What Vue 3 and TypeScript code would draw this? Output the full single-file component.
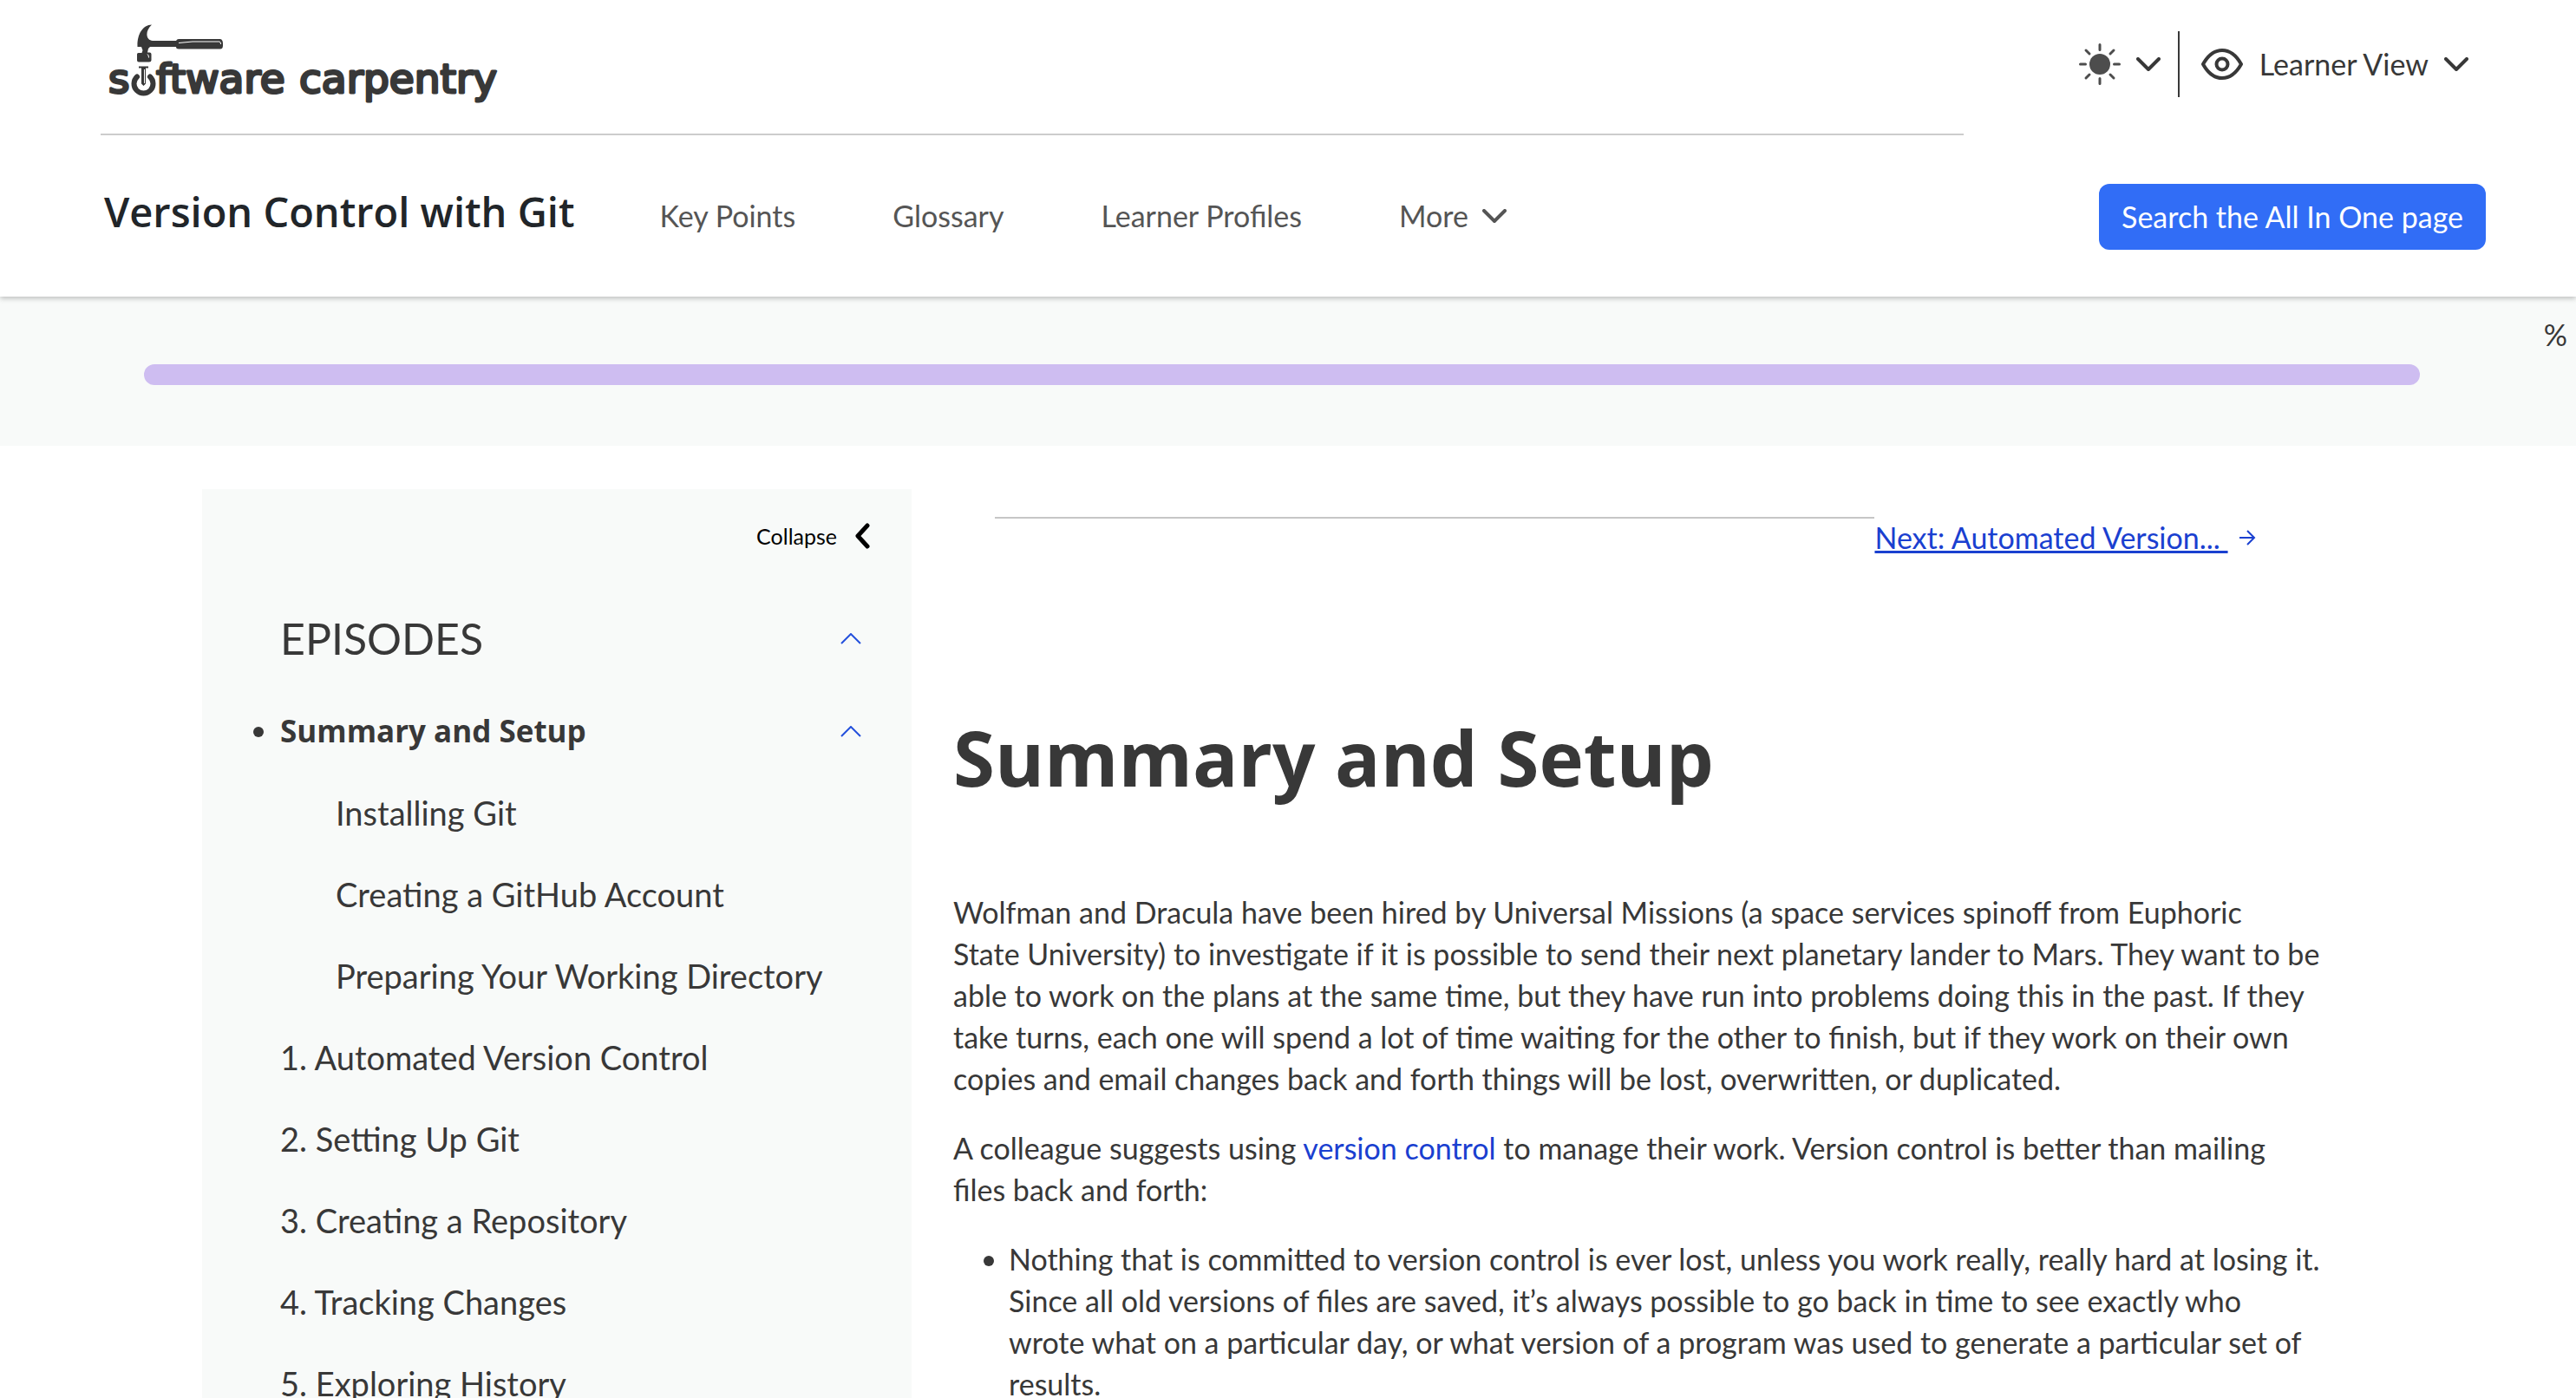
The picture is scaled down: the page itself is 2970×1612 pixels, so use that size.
<script setup lang="ts">
import { ref } from 'vue'

interface Episode {
  label: string
}

const navLinks: string[] = ['Key Points', 'Glossary', 'Learner Profiles']
const sections: string[] = ['Installing Git', 'Creating a GitHub Account', 'Preparing Your Working Directory']
const episodes: Episode[] = [
  { label: '1. Automated Version Control' },
  { label: '2. Setting Up Git' },
  { label: '3. Creating a Repository' },
  { label: '4. Tracking Changes' },
  { label: '5. Exploring History' },
]
const episodesOpen = ref(true)
const sectionsOpen = ref(true)
</script>

<template>
  <div class="page">
    <header class="header">
      <div class="top">
        <a class="brand" href="#" aria-label="software carpentry">
          <svg width="464" height="100" viewBox="0 0 464 100">
            <text class="wordmark" x="9" y="79">s<tspan class="ghost">o</tspan><tspan x="64">ftware</tspan> <tspan x="229">carpentry</tspan></text>
            <path class="ring" d="M42 60.500A11 11 0 1 0 57 60.500" />
            <path class="ink" d="M44 48.500h11v2h-3v18l-2.500 2.500l-2.500-2.500v-18h-3z" />
            <path class="shine" d="M50.500 52v16" />
            <path
              class="ink"
              d="M59 0.500C48 1 42 12 42.500 26h4.500l1.500 4l-1 3h-4q-1.500 0-1.500 1.500v7q0 2 2 2h12q2.500 0 2.500-2v-7q0-2-2-2h-2.500l1-4.500l2-2H87q0 2.500 3 2.500h48q3 0 3-4v-2q0-5-3-5.500H90q-2 0-3 2H60C53 18.500 50 9 59 0.500z"
            />
            <path class="shine" d="M90 21.500l16-1.500h31q1.500 0 1.500 3M54 34.500q1.500 1 1.500 4" />
          </svg>
        </a>
        <div class="tools">
          <button class="tool" type="button" aria-label="Colour theme">
            <svg width="48" height="48" viewBox="0 0 48 48">
              <circle cx="24" cy="24" r="12" fill="#4d4d4d" />
              <path
                d="M24 1.500v6M24 40.500v6M1.500 24h6M40.500 24h6M8 8l4 4M36 36l4 4M8 40l4-4M36 12l4-4"
                stroke="#4d4d4d" stroke-width="3" stroke-linecap="round"
              />
            </svg>
            <svg class="chevron" width="28" height="16" viewBox="0 0 28 16">
              <path d="M2 2l12 12L26 2" />
            </svg>
          </button>
          <span class="divider"></span>
          <button class="tool view" type="button">
            <svg width="50" height="38" viewBox="0 0 50 38">
              <path d="M3 19Q12 3 25 3T47 19Q38 35 25 35T3 19z" fill="none" stroke="#383838" stroke-width="4" stroke-linejoin="round" />
              <circle cx="25" cy="19" r="6.500" fill="none" stroke="#383838" stroke-width="4" />
            </svg>
            <span>Learner View</span>
            <svg class="chevron" width="28" height="16" viewBox="0 0 28 16">
              <path d="M2 2l12 12L26 2" />
            </svg>
          </button>
        </div>
      </div>
      <div class="bar">
        <a class="title" href="#">Version Control with Git</a>
        <nav class="nav">
          <a v-for="link in navLinks" :key="link" href="#">{{ link }}</a>
          <button class="more" type="button">
            More
            <svg class="chevron" width="28" height="16" viewBox="0 0 28 16">
              <path d="M2 2l12 12L26 2" />
            </svg>
          </button>
        </nav>
        <button class="search" type="button">Search the All In One page</button>
      </div>
    </header>

    <section class="progress">
      <span class="percent">%</span>
      <div class="track"></div>
    </section>

    <div class="main">
      <aside class="sidebar">
        <button class="collapse" type="button">
          Collapse
          <svg width="18" height="30" viewBox="0 0 18 30">
            <path d="M15 3L4 15L15 27" fill="none" stroke="#000" stroke-width="5" stroke-linecap="round" stroke-linejoin="round" />
          </svg>
        </button>
        <div class="group">
          <h2>EPISODES</h2>
          <button class="toggle" type="button" aria-label="Toggle episodes" @click="episodesOpen = !episodesOpen">
            <svg width="24" height="13" viewBox="0 0 24 13"><path d="M1 12L12 1l11 11" /></svg>
          </button>
        </div>
        <ul v-if="episodesOpen" class="episodes">
          <li class="row current">
            <a href="#">Summary and Setup</a>
            <button class="toggle" type="button" aria-label="Toggle sections" @click="sectionsOpen = !sectionsOpen">
              <svg width="24" height="13" viewBox="0 0 24 13"><path d="M1 12L12 1l11 11" /></svg>
            </button>
          </li>
          <template v-if="sectionsOpen">
            <li v-for="section in sections" :key="section" class="row sub"><a href="#">{{ section }}</a></li>
          </template>
          <li v-for="episode in episodes" :key="episode.label" class="row"><a href="#">{{ episode.label }}</a></li>
        </ul>
      </aside>

      <main class="content">
        <div class="pager">
          <hr />
          <a class="next" href="#"><span>Next: Automated Version...&nbsp;</span>
            <svg width="20" height="20" viewBox="0 0 20 20">
              <path d="M1 10h17M10 2l8 8l-8 8" fill="none" stroke="#1a40d0" stroke-width="2" />
            </svg>
          </a>
        </div>
        <h1>Summary and Setup</h1>
        <p>
          Wolfman and Dracula have been hired by Universal Missions (a space services spinoff from Euphoric<br />
          State University) to investigate if it is possible to send their next planetary lander to Mars. They want to be<br />
          able to work on the plans at the same time, but they have run into problems doing this in the past. If they<br />
          take turns, each one will spend a lot of time waiting for the other to finish, but if they work on their own<br />
          copies and email changes back and forth things will be lost, overwritten, or duplicated.
        </p>
        <p>
          A colleague suggests using <a href="#">version control</a> to manage their work. Version control is better than mailing<br />
          files back and forth:
        </p>
        <ul class="points">
          <li>
            Nothing that is committed to version control is ever lost, unless you work really, really hard at losing it.<br />
            Since all old versions of files are saved, it’s always possible to go back in time to see exactly who<br />
            wrote what on a particular day, or what version of a program was used to generate a particular set of<br />
            results.
          </li>
        </ul>
      </main>
    </div>
  </div>
</template>

<style>
body {
  margin: 0;
  background: #fff;
}
</style>

<style scoped>
.page {
  display: flex;
  flex-direction: column;
  height: 100vh;
  overflow: hidden;
  color: #383838;
  font: 34px/48px Lato, sans-serif;
}
button {
  padding: 0;
  border: 0;
  background: none;
  color: inherit;
  font: inherit;
  cursor: pointer;
}
a {
  color: inherit;
  text-decoration: none;
}
svg {
  display: block;
  flex: none;
}
.chevron path {
  fill: none;
  stroke: currentColor;
  stroke-width: 4;
  stroke-linecap: round;
  stroke-linejoin: round;
}

/* Header */
.header {
  position: relative;
  flex: none;
  background: #fff;
  box-shadow: 0 2px 6px rgba(0, 0, 0, 0.25);
}
.top {
  display: flex;
  padding-left: 116px;
}
.brand {
  flex: 1;
  padding: 28px 0 26px;
  border-bottom: 2px solid #ccc;
}
.wordmark {
  fill: #383838;
  stroke: #383838;
  stroke-width: 3;
  stroke-linejoin: round;
  font: 47px "DejaVu Sans", sans-serif;
}
.ghost {
  fill: none;
  stroke: none;
}
.ring {
  fill: none;
  stroke: #383838;
  stroke-width: 6;
  stroke-linecap: round;
}
.ink {
  fill: #383838;
}
.shine {
  fill: none;
  stroke: #fff;
  stroke-width: 1;
}
.tools {
  display: flex;
  align-items: center;
  justify-content: flex-end;
  gap: 20px;
  box-sizing: border-box;
  width: 706px;
  padding: 0 124px 8px 0;
}
.tool {
  display: flex;
  align-items: center;
  gap: 18px;
}
.view {
  margin-left: 4px;
}
.divider {
  width: 2px;
  height: 76px;
  background: #383838;
}
.bar {
  display: flex;
  align-items: center;
  height: 184px;
  padding: 2px 104px 0 120px;
}
.title {
  padding-bottom: 12px;
  color: #212529;
  font-family: "Open Sans", sans-serif;
  font-size: 47px;
  font-weight: 600;
  line-height: 58px;
}
.nav {
  display: flex;
  flex: 1;
  gap: 112px;
  margin-left: 98px;
  padding-bottom: 2px;
  color: #555;
}
.more {
  display: flex;
  align-items: center;
  gap: 16px;
}
.search {
  height: 76px;
  padding: 0 26px;
  border-radius: 12px;
  background: #316df6;
  color: #fff;
}

/* Progress */
.progress {
  display: flex;
  flex: none;
  flex-direction: column;
  gap: 10px;
  padding: 20px 0 70px;
  background: #f8faf9;
}
.percent {
  padding-right: 10px;
  text-align: right;
}
.track {
  height: 24px;
  margin: 0 180px 0 166px;
  border-radius: 12px;
  background: #cebdf1;
}

/* Body */
.main {
  display: flex;
  flex: none;
  padding: 50px 300px 0 233px;
}
.sidebar {
  display: flex;
  flex: none;
  flex-direction: column;
  box-sizing: border-box;
  width: 818px;
  padding: 36px 0 0 90px;
  background: #f8faf9;
}
.collapse {
  display: flex;
  align-items: center;
  align-self: flex-end;
  gap: 20px;
  margin-right: 48px;
  color: #000;
  font-size: 25px;
  line-height: 36px;
}
.group {
  display: flex;
  align-items: center;
  justify-content: space-between;
  margin: 71px 58px 31px 0;
}
h2 {
  margin: 0;
  font-size: 50px;
  font-weight: 400;
  line-height: 58px;
}
.toggle path {
  fill: none;
  stroke: #2450dc;
  stroke-width: 2;
}
.episodes {
  margin: 0;
  padding: 0 58px 0 0;
  list-style: none;
}
.row {
  position: relative;
  display: flex;
  align-items: center;
  justify-content: space-between;
  height: 94px;
  font-size: 38px;
}
.current {
  font-family: "Open Sans", sans-serif;
  font-size: 35px;
  font-weight: 700;
}
.current::before,
.points li::before {
  content: "";
  position: absolute;
  top: 42px;
  left: -31px;
  width: 12px;
  height: 12px;
  border-radius: 50%;
  background: #383838;
}
.sub {
  padding-left: 64px;
}
.content {
  flex: 1;
  padding: 32px 0 0 48px;
  white-space: nowrap;
}
.pager {
  display: flex;
  align-items: flex-start;
  margin: 0 70px 176px 48px;
}
hr {
  flex: 1;
  margin: 0;
  border: 0;
  border-top: 2px solid #c6c6c6;
}
.next {
  display: flex;
  align-items: center;
  gap: 12px;
  margin-right: 4px;
  color: #1a40d0;
}
.next span {
  text-decoration: underline;
  text-decoration-thickness: 3px;
  text-decoration-skip-ink: none;
}
h1 {
  margin: 0 0 102px;
  font-family: "Open Sans", sans-serif;
  font-size: 87px;
  font-weight: 700;
  line-height: 106px;
}
p {
  margin: 0 0 32px;
}
p a {
  color: #1a40d0;
}
.points {
  margin: 0;
  padding-left: 64px;
  list-style: none;
}
.points li {
  position: relative;
}
.points li::before {
  top: 20px;
  left: -29px;
}
</style>
